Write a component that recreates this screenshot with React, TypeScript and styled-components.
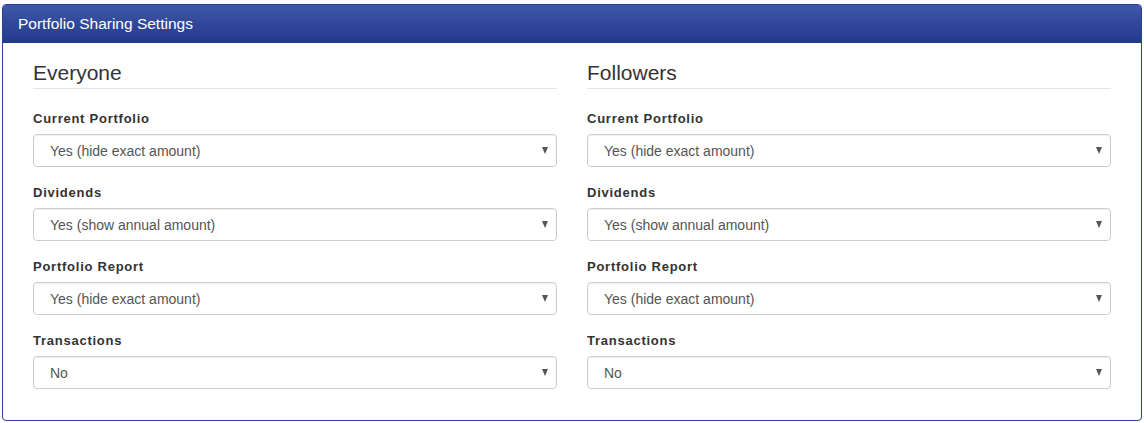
import { createGlobalStyle, styled } from "styled-components";

//NOTE GLOBAL
const GlobalStyle = createGlobalStyle`
    body {
        margin: 0;
        padding: 4px 2px 0 2px;
        background: #ffffff;
        font-family: "Liberation Sans", Arial, sans-serif;
    }
`;

const Panel = styled.section`
    border: 1px solid #2b4093;
    border-radius: 4px;
    overflow: hidden;
    background: #ffffff;
`;

const PanelHeader = styled.header`
    height: 38px;
    padding: 0 15px;

    display: flex;
    align-items: center;

    color: #ffffff;
    font-size: 15.5px;

    background: linear-gradient(to bottom, #4058a8 0%, #22388c 100%);
`;

const PanelBody = styled.div`
    padding: 19px 30px 31px 30px;

    display: grid;
    grid-template-columns: 1fr 1fr;
    column-gap: 30px;
`;

const Column = styled.div`
    display: flex;
    flex-direction: column;
`;

const Heading = styled.h3`
    margin: 0 0 20px 0;
    padding-bottom: 4px;

    font-size: 21px;
    font-weight: normal;
    line-height: 22px;
    color: #333333;

    border-bottom: 1px solid #e5e5e5;
`;

const Field = styled.div`
    margin-bottom: 16px;

    &:last-child {
        margin-bottom: 0;
    }
`;

const Label = styled.label`
    display: block;
    margin-top: 1px;
    margin-bottom: 6px;

    font-size: 13px;
    font-weight: bold;
    line-height: 18px;
    letter-spacing: 0.75px;
    color: #333333;
`;

const SelectBox = styled.div`
    height: 33px;
    padding: 0 8px 0 16px;
    box-sizing: border-box;

    display: flex;
    align-items: center;
    justify-content: space-between;

    font-size: 14px;
    color: #555555;

    border: 1px solid #cccccc;
    border-radius: 4px;
    box-shadow: inset 0 1px 1px rgba(0, 0, 0, 0.06);
`;

const Arrow = styled.span`
    width: 0;
    height: 0;

    border-left: 3.5px solid transparent;
    border-right: 3.5px solid transparent;
    border-top: 7px solid #555555;
`;

type Setting = { label: string; value: string };

const settings: Setting[] = [
    { label: "Current Portfolio", value: "Yes (hide exact amount)" },
    { label: "Dividends", value: "Yes (show annual amount)" },
    { label: "Portfolio Report", value: "Yes (hide exact amount)" },
    { label: "Transactions", value: "No" },
];

function SettingsColumn({ title }: { title: string }) {
    return (
        <Column>
            <Heading>{title}</Heading>
            {settings.map((s) => (
                <Field key={s.label}>
                    <Label>{s.label}</Label>
                    <SelectBox>
                        <span>{s.value}</span>
                        <Arrow />
                    </SelectBox>
                </Field>
            ))}
        </Column>
    );
}

export default function App() {
    return (
        <>
            <GlobalStyle />
            <Panel>
                <PanelHeader>Portfolio Sharing Settings</PanelHeader>
                <PanelBody>
                    <SettingsColumn title="Everyone" />
                    <SettingsColumn title="Followers" />
                </PanelBody>
            </Panel>
        </>
    );
}
